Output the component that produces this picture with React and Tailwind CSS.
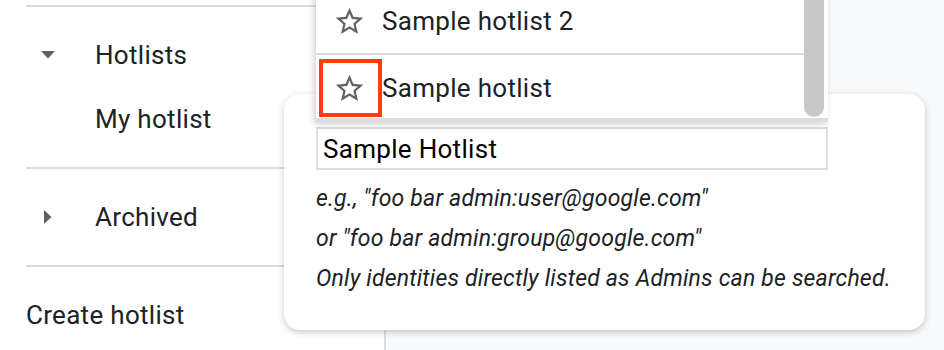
import { useState } from "react";

const StarOutline = ({ className = "" }) => (
  <svg viewBox="0 0 24 24" className={className} fill="#5f6368">
    <path d="M22 9.24l-7.19-.62L12 2 9.19 8.63 2 9.24l5.46 4.73L5.82 21 12 17.27 18.18 21l-1.63-7.03L22 9.24zM12 15.4l-3.76 2.27 1-4.28-3.32-2.88 4.38-.38L12 6.1l1.71 4.04 4.38.38-3.32 2.88 1 4.28L12 15.4z" />
  </svg>
);

const CaretDown = () => (
  <svg viewBox="0 0 14 8" className="w-[14px] h-[8px]" fill="#5f6368">
    <path d="M0 0l7 7.5L14 0z" />
  </svg>
);

const CaretRight = () => (
  <svg viewBox="0 0 8 14" className="w-[8px] h-[14px]" fill="#5f6368">
    <path d="M0 0l7.5 7L0 14z" />
  </svg>
);

const hotlists = [
  { id: 2, name: "Sample hotlist 2" },
  { id: 1, name: "Sample hotlist", highlighted: true },
];

const App = () => {
  const [title, setTitle] = useState("Sample Hotlist");

  return (
    <div className="relative w-[944px] h-[350px] overflow-hidden flex bg-[#f8f9fa] font-['Roboto',sans-serif] text-[#202124]">
      {/* Sidebar */}
      <aside className="w-[386px] h-full bg-white border-r-2 border-[#dadce0] pt-[5px] pl-[26px] text-[26px] tracking-[0.3px]">
        <div className="border-t-2 border-[#dadce0] py-4">
          <div className="h-16 flex items-center">
            <span className="w-[69px] pl-[15px]">
              <CaretDown />
            </span>
            <span>Hotlists</span>
          </div>
          <div className="h-16 flex items-center pl-[69px]">My hotlist</div>
        </div>
        <div className="border-t-2 border-[#dadce0] py-4">
          <div className="h-16 flex items-center">
            <span className="w-[69px] pl-[18px]">
              <CaretRight />
            </span>
            <span>Archived</span>
          </div>
        </div>
        <div className="border-t-2 border-[#dadce0] pt-4">
          <div className="h-16 flex items-center">Create hotlist</div>
        </div>
      </aside>

      <main className="flex-1" />

      {/* Dialog */}
      <div className="absolute left-[284px] top-[94px] w-[641px] h-[236px] bg-white rounded-2xl shadow-[0_2px_6px_rgba(60,64,67,0.3)] pl-8 pt-[33px]">
        <input
          value={title}
          onChange={(e) => setTitle(e.target.value)}
          className="w-[512px] h-[43px] border-2 border-[#dadce0] px-[5px] text-[26px] tracking-[0.3px] text-black outline-none font-['Roboto',sans-serif]"
        />
        <div className="mt-[9px] text-[23px] tracking-[0.2px] italic text-[#202124] leading-[40px]">
          <p>e.g., "foo bar admin:user@google.com"</p>
          <p>or "foo bar admin:group@google.com"</p>
          <p>Only identities directly listed as Admins can be searched.</p>
        </div>
      </div>

      {/* Hotlist dropdown */}
      <div className="absolute left-[316px] top-[-11px] w-[512px] h-[133px] bg-white border-b-[4px] border-[#dadce0] shadow-[-2px_2px_6px_rgba(60,64,67,0.25)] flex">
        <ul className="flex-1">
          {hotlists.map((h, i) => (
            <li
              key={h.id}
              className={`relative h-[66px] flex items-center text-[26px] tracking-[0.3px] ${
                i === 0 ? "border-b-2 border-[#dadce0]" : ""
              }`}
            >
              <span className="w-[66px] flex justify-center">
                <StarOutline className="w-[33px] h-[33px]" />
              </span>
              <span>{h.name}</span>
              {h.highlighted && (
                <span className="absolute left-[3px] top-[4px] w-[63px] h-[58px] border-4 border-[#ff3d0d]" />
              )}
            </li>
          ))}
        </ul>
        <div className="w-[24px] pr-[3px] pb-[1px]">
          <div className="w-[20px] h-full bg-[#c8c8c8] rounded-b-full" />
        </div>
      </div>
    </div>
  );
};

export default App;
